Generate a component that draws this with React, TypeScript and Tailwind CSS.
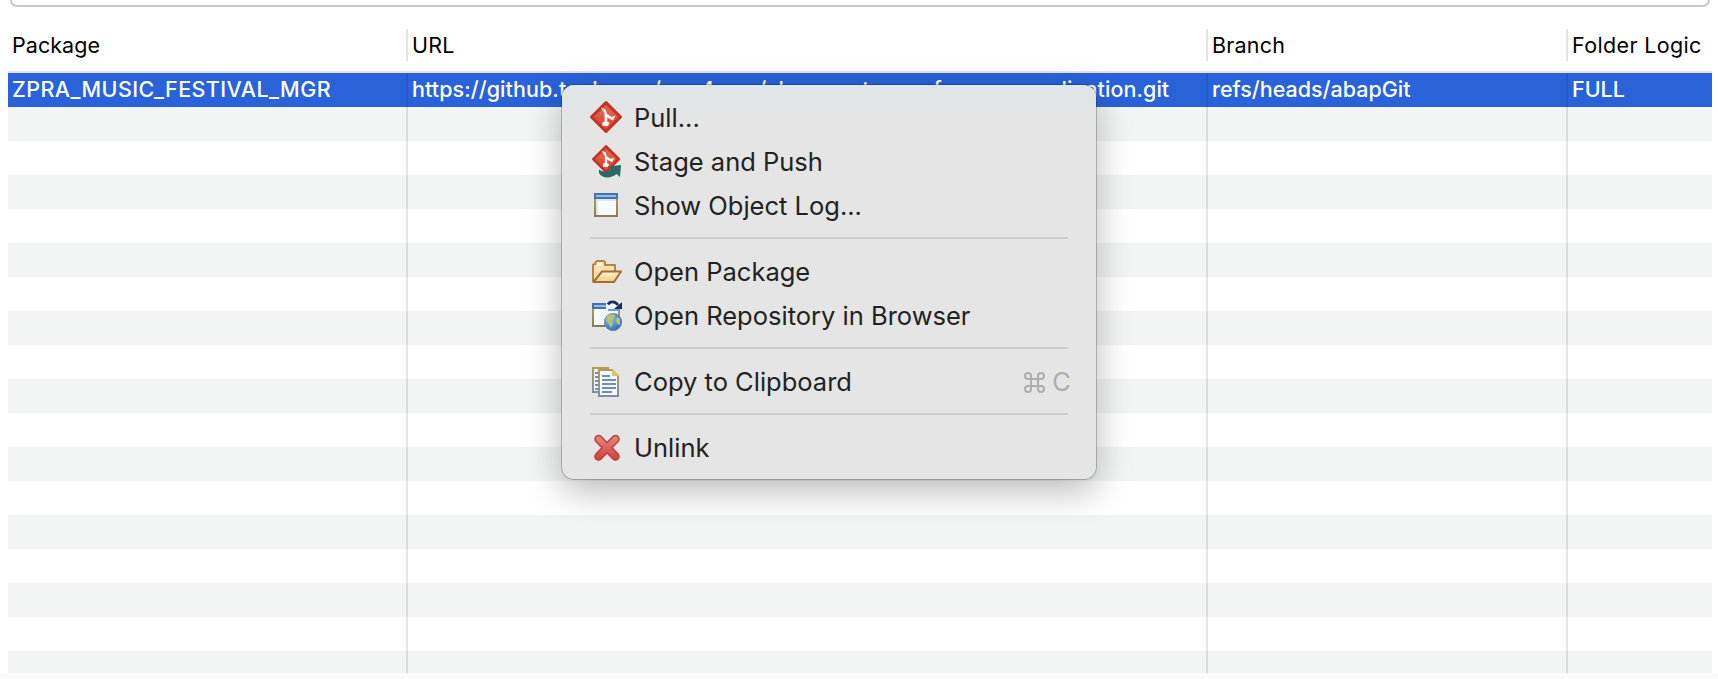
import React from "react";

type IconProps = { children: React.ReactNode };

function Icon({ children }: IconProps) {
  return (
    <svg className="block size-8 shrink-0 overflow-visible" viewBox="0 0 32 32" fill="none">
      {children}
    </svg>
  );
}

function GitDiamond() {
  return (
    <>
      <path d="M16 1.500 L30.500 16 L16 30.500 L1.500 16 Z" fill="#e04e39" stroke="#bf3423" strokeWidth="3" strokeLinejoin="round" />
      <path d="M16 4 L28 16 L4 16 Z" fill="#e8796a" opacity="0.35" />
      <path d="M11 6.5 L15.5 8.5 L17 13 L21.5 16 L25.5 14.5 L23 19.5 L19 17.5 L17.3 16.2 L17.3 21 L19.5 21.5 L18 25 L12.5 25 L12.5 21.5 L14.6 20.5 L14.6 12.5 Z" fill="#fff" />
    </>
  );
}

function PullIcon() {
  return (
    <Icon>
      <g transform="translate(0 -1)">
        <GitDiamond />
      </g>
    </Icon>
  );
}

function PushIcon() {
  return (
    <Icon>
      <g transform="translate(2 -1) scale(0.88)">
        <GitDiamond />
      </g>
      <path d="M9 23.5 C12 26 17 26.5 21 23 L18.5 20.5 L31 19 L30 31 L26.5 28 C21 33 11.5 32.5 9 27 Z" fill="#2b6a6a" />
    </Icon>
  );
}

function WindowIcon() {
  return (
    <Icon>
      <defs>
        <linearGradient id="frame" x1="0" y1="0" x2="0" y2="1">
          <stop offset="0" stopColor="#c2a04e" />
          <stop offset="1" stopColor="#877b57" />
        </linearGradient>
      </defs>
      <path d="M4 3h24v24H4z" fill="url(#frame)" />
      <path d="M4 3h24v6H4z" fill="#4571ae" />
      <path d="M6 5h20v2H6z" fill="#8dc0ee" />
      <path d="M6 9h20v16H6z" fill="#d9e8f8" />
      <path d="M8 11h18v14H8z" fill="#f5fbff" />
    </Icon>
  );
}

function FolderIcon() {
  return (
    <Icon>
      <defs>
        <linearGradient id="flap" x1="0" y1="0" x2="0" y2="1">
          <stop offset="0" stopColor="#fdf3cf" />
          <stop offset="1" stopColor="#efcd7e" />
        </linearGradient>
      </defs>
      <path d="M3 26V8.5L5.5 8V6L7 5h6.5L15 6v3h10v6.5" fill="#f6e2ae" stroke="#b98345" strokeWidth="2" strokeLinejoin="round" />
      <path d="M3.5 26 L12 15.5 H31 L24 26 Z" fill="url(#flap)" stroke="#a66c34" strokeWidth="2" strokeLinejoin="round" />
      <path d="M7 7h5v2.5H7z" fill="#fff" opacity="0.8" />
    </Icon>
  );
}

function BrowserIcon() {
  return (
    <Icon>
      <defs>
        <radialGradient id="globe" cx="0.35" cy="0.3" r="0.8">
          <stop offset="0" stopColor="#9cc6ee" />
          <stop offset="0.6" stopColor="#4e86cc" />
          <stop offset="1" stopColor="#3461a0" />
        </radialGradient>
      </defs>
      <path d="M2 3h28v24H2z" fill="url(#frame)" />
      <path d="M2 3h18v6H2z" fill="#4571ae" />
      <path d="M4 5h16v2H4z" fill="#8dc0ee" />
      <path d="M4 9h24v16H4z" fill="#f5fbff" />
      <path d="M16 1h16v8H16z" fill="#f4f6f9" />
      <path d="M18 9h12v2H18z" fill="#6c9fd6" />
      <path d="M18 4.500 C20 1 25 1 28 5" stroke="#1b2f5c" strokeWidth="2.8" />
      <path d="M32 2 V9 H24 Z" fill="#1b2f5c" />
      <circle cx="23" cy="22" r="9" fill="url(#globe)" />
      <path d="M17 16 L22 14 L25 16 L23 19 L21 20 L23 23 L21 28 L19 24 L16 20 Z" fill="#b9c46a" />
      <path d="M27 17 L30 19 L30 25 L27 24 L26 21 Z" fill="#b9c46a" />
      <circle cx="23" cy="22" r="8.6" stroke="#6e8fb5" strokeWidth="0.8" />
    </Icon>
  );
}

function CopyIcon() {
  return (
    <Icon>
      <defs>
        <linearGradient id="sheet" x1="0" y1="0" x2="0" y2="1">
          <stop offset="0" stopColor="#b79a58" />
          <stop offset="1" stopColor="#7f8ea6" />
        </linearGradient>
      </defs>
      <path d="M3 2h15v24H3z" fill="#edf4fa" stroke="url(#sheet)" strokeWidth="2" />
      <path d="M5 7h3M5 11h3M5 15h3M5 19h3M5 23h3" stroke="#6f8fba" strokeWidth="2" />
      <path d="M9 4h13l6 6v20H9z" fill="#f4fafd" stroke="url(#sheet)" strokeWidth="2" />
      <path d="M22 3v7h7z" fill="#e2c16e" />
      <path d="M12 10h8M12 14h14M12 18h14M12 22h14M12 26h10" stroke="#6f8fba" strokeWidth="2" />
    </Icon>
  );
}

function DeleteIcon() {
  return (
    <Icon>
      <defs>
        <linearGradient id="cross" gradientUnits="userSpaceOnUse" x1="0" y1="2" x2="0" y2="29">
          <stop offset="0" stopColor="#e78c83" />
          <stop offset="1" stopColor="#d23c3c" />
        </linearGradient>
      </defs>
      <path d="M8.500 7 L25.500 24.500 M25.500 7 L8.500 24.500" stroke="#bb3f3a" strokeWidth="8.600" strokeLinecap="round" />
      <path d="M8.500 7 L25.500 24.500 M25.500 7 L8.500 24.500" stroke="url(#cross)" strokeWidth="5.400" strokeLinecap="round" />
    </Icon>
  );
}

function MenuItem({ icon, label, shortcut }: { icon: React.ReactNode; label: string; shortcut?: boolean }) {
  return (
    <div className="flex h-11 items-center pr-[25px] pl-7">
      {icon}
      <span className="ml-[12px] pt-px">{label}</span>
      {shortcut && (
        <span className="ml-auto flex items-center gap-[7px] pt-px text-[#adadad]">
          <svg className="-mt-px block size-[21px]" viewBox="0 0 21 21" fill="none" stroke="currentColor" strokeWidth="2">
            <path d="M7 7V4a3 3 0 1 0-3 3h13a3 3 0 1 0-3-3v13a3 3 0 1 0 3-3H4a3 3 0 1 0 3 3z" />
          </svg>
          C
        </span>
      )}
    </div>
  );
}

function Separator() {
  return (
    <div className="h-[22px] pt-[9px] pr-7 pl-7">
      <div className="h-[2px] bg-[#cdcdcd]" />
    </div>
  );
}

const COLUMNS = "grid grid-cols-[400px_800px_360px_144px]";
const CELL = "flex items-center pl-[4px] whitespace-nowrap";

function GridLines() {
  return (
    <div className={`${COLUMNS} pointer-events-none absolute inset-0`}>
      <div className="border-r-2 border-black/10" />
      <div className="border-r-2 border-black/10" />
      <div className="border-r-2 border-black/10" />
      <div />
    </div>
  );
}

export default function App() {
  return (
    <div className="relative h-[679px] w-[1718px] overflow-hidden bg-white font-['Inter','Liberation_Sans',sans-serif] text-black">
      <div className="mr-[8px] ml-[10px] h-[7px] rounded-b-[10px] border-2 border-t-0 border-[#c8c8c8]" />

      <div className={`${COLUMNS} mt-[22px] ml-2 h-8 w-[1704px] text-[21.5px]`}>
        <div className={`${CELL} border-r-2 border-[#e3e3e3] tracking-[0.05px]`}>Package</div>
        <div className={`${CELL} border-r-2 border-[#e3e3e3] tracking-[0.2px]`}>URL</div>
        <div className={`${CELL} border-r-2 border-[#e3e3e3] tracking-[0.2px]`}>Branch</div>
        <div className={`${CELL} tracking-[0.35px]`}>Folder Logic</div>
      </div>
      <div className="mt-[10px] ml-2 h-[2px] w-[1704px] bg-[#e3e3e3]" />

      <div className="relative ml-2 h-[600px] w-[1704px] overflow-hidden">
        <div className={`${COLUMNS} h-[34px] bg-[#2962d9] pb-[2px] text-[21.5px] font-medium text-white`}>
          <div className={`${CELL} tracking-[0.43px]`}>ZPRA_MUSIC_FESTIVAL_MGR</div>
          <div className={`${CELL} tracking-[0.06px]`}>https://github.tools.sap/srm4sme/abap-partner-reference-application.git</div>
          <div className={CELL}>refs/heads/abapGit</div>
          <div className={CELL}>FULL</div>
        </div>
        {Array.from({ length: 17 }, (_, i) => (
          <div key={i} className={`h-[34px] ${i % 2 === 0 ? "bg-[#f3f5f4]" : "bg-white"}`} />
        ))}
        <GridLines />
      </div>
      <div className="h-[6px] bg-[#fafafa]" />

      <div className="absolute top-[85px] left-[562px] h-[394px] w-[534px] rounded-[12px] bg-[#e5e5e5] bg-linear-to-b from-[#e0e5e6] to-[#e5e5e5] to-10% pt-[11px] text-[25.5px] text-[#222] shadow-[0_0_0_1px_rgba(0,0,0,0.22),0_12px_36px_rgba(0,0,0,0.28)]">
        <MenuItem icon={<PullIcon />} label="Pull..." />
        <MenuItem icon={<PushIcon />} label="Stage and Push" />
        <MenuItem icon={<WindowIcon />} label="Show Object Log..." />
        <Separator />
        <MenuItem icon={<FolderIcon />} label="Open Package" />
        <MenuItem icon={<BrowserIcon />} label="Open Repository in Browser" />
        <Separator />
        <MenuItem icon={<CopyIcon />} label="Copy to Clipboard" shortcut />
        <Separator />
        <MenuItem icon={<DeleteIcon />} label="Unlink" />
      </div>
    </div>
  );
}
